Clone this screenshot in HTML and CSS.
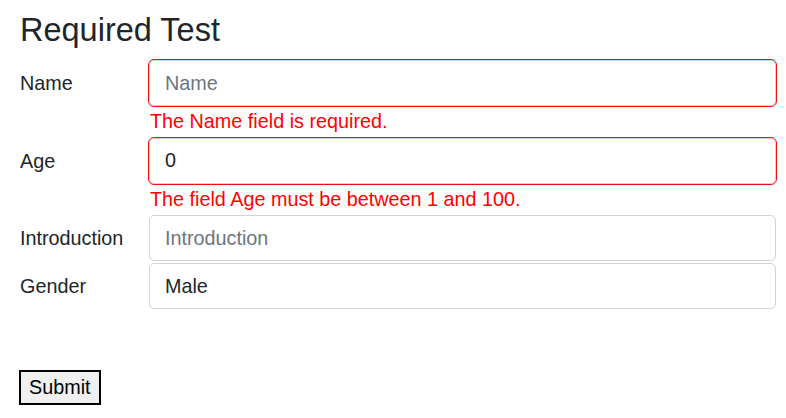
FILE: index.html
```html
<!DOCTYPE html>
<html>
<head>
<meta charset="utf-8">
<link rel="stylesheet" href="styles.css">
</head>
<body>
<div class="page">
  <h3 class="title">Required Test</h3>
  <form class="form">
    <div class="row">
      <label class="label">Name</label>
      <div class="field">
        <input class="control invalid" placeholder="Name">
        <div class="message">The Name field is required.</div>
      </div>
    </div>
    <div class="row">
      <label class="label">Age</label>
      <div class="field">
        <input class="control invalid" value="0">
        <div class="message">The field Age must be between 1 and 100.</div>
      </div>
    </div>
    <div class="row">
      <label class="label">Introduction</label>
      <div class="field">
        <input class="control" placeholder="Introduction">
      </div>
    </div>
    <div class="row">
      <label class="label">Gender</label>
      <div class="field">
        <input class="control" value="Male">
      </div>
    </div>
    <div class="actions">
      <button type="button" class="submit">Submit</button>
    </div>
  </form>
</div>
</body>
</html>
```

FILE: styles.css
```css
html, body {
  margin: 0;
  padding: 0;
  background: #fff;
}
body {
  font-family: "Liberation Sans", Arial, sans-serif;
  font-size: 19.8px;
  color: #212529;
}
.page {
  padding: 11px 10px 0 20px;
}
.title {
  margin: 0 0 10px 0;
  font-size: 32.5px;
  font-weight: 400;
  line-height: 1.2;
  color: #212529;
}
.form {
  display: flex;
  flex-direction: column;
}
.row {
  display: grid;
  grid-template-columns: 129px 1fr;
  margin-bottom: 1px;
}
.label {
  display: flex;
  align-items: center;
  height: 47px;
  line-height: 1.45;
}
.field {
  display: flex;
  flex-direction: column;
}
.control {
  box-sizing: border-box;
  width: 100%;
  height: 46px;
  margin: 0;
  padding: 0 15px;
  border: 1px solid #ced4da;
  border-radius: 5px;
  font-family: "Liberation Sans", Arial, sans-serif;
  font-size: 19.8px;
  color: #212529;
  background: #fff;
}
.control::placeholder {
  color: #6c757d;
}
.control.invalid {
  outline: 1px solid #f01010;
}
.message {
  color: #ff0000;
  line-height: 1.55;
  padding-left: 1px;
}
.actions {
  padding-top: 59px;
}
.submit {
  font-family: "Liberation Sans", Arial, sans-serif;
  font-size: 19.8px;
  color: #000;
  background: #efefef;
  border: 2px solid #000;
  border-radius: 0;
  padding: 4px 8px 4px 8px;
  margin-left: -1px;
  line-height: 1.15;
}
```
